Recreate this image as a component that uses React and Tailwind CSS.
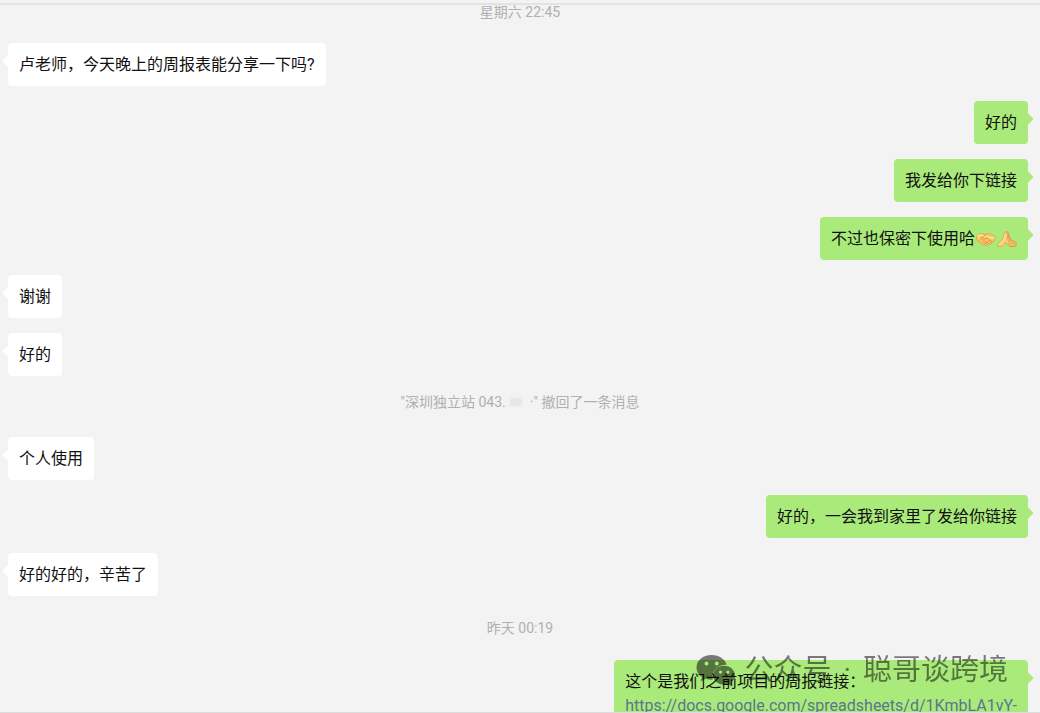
function HandshakeIcon() {
  return (
    <svg viewBox="0 0 40 28" className="w-5 h-4 shrink-0" role="img" aria-label="握手">
      <path d="M1 8 9 3l8 2 5-2 8 1 9 6-4 10-10 6-6 1-11-5-7-6z" fill="#f8c860" stroke="#d8964a" strokeWidth="1.2" strokeLinejoin="round" />
      <path d="M2 9c6-4 10-3 13-1l8 2c5 1 9 2 14 1" fill="none" stroke="#fce4a0" strokeWidth="3" />
      <path d="m21 5-9 6c0 3 3 4 6 2l4-1 10 7" fill="#fbd878" stroke="#c87f38" strokeWidth="1.4" strokeLinejoin="round" />
      <path d="m8 17 4-4m1 8 4-5m1 8 4-4m3-3 5 5m-9-3 5 5m-9-3 4 3" fill="none" stroke="#c87f38" strokeWidth="1.3" strokeLinecap="round" />
    </svg>
  );
}

function PrayIcon() {
  return (
    <svg viewBox="0 0 40 34" className="w-5 h-[17px] shrink-0" role="img" aria-label="合十">
      <path d="M17 2c3-2 5 0 6 3l4 11 10 7c3 3 2 8-2 8h-9l-6-6-3-12z" fill="#f6bd62" stroke="#c87f38" strokeWidth="1.2" strokeLinejoin="round" />
      <path d="M15 4c2-3 6-1 6 2v11l3 6c1 3-1 5-4 3l-3-3-3 5-4 3H4c-4 0-4-4-1-7l8-8z" fill="#fbcf74" stroke="#d8964a" strokeWidth="1.2" strokeLinejoin="round" />
      <path d="M17 6 13 18l-8 9" fill="none" stroke="#fde3a0" strokeWidth="2" strokeLinecap="round" />
      <path d="m22 7 3 11 9 9" fill="none" stroke="#d8964a" strokeWidth="1.4" strokeLinecap="round" />
    </svg>
  );
}

function WeChatIcon() {
  return (
    <svg viewBox="0 0 40 32" className="h-8 w-10 shrink-0" aria-hidden="true">
      <path
        fillRule="evenodd"
        fill="#000"
        d="M15.500 1C7 1 .5 6.500.5 13.500c0 4 2 7.400 5.500 9.700L4.500 27.500l5.200-2.700c2.300.7 4.700 1 7.100.8-2-8.300 4.800-15.200 13.800-14.800C29 5 23 1 15.500 1ZM10.500 7.500a2 2 0 1 1 0 4 2 2 0 0 1 0-4Zm10.300 0a2 2 0 1 1 0 4 2 2 0 0 1 0-4Z"
      />
      <path
        fillRule="evenodd"
        fill="#000"
        d="M39 21.300c0-5.300-5-9.500-11-9.500s-10.800 4.200-10.800 9.500S22 30.700 28 30.700c1.400 0 2.700-.2 3.900-.6l4.100 2-1.100-3.500c2.500-1.700 4.100-4.300 4.100-7.300ZM24.500 16.500a1.600 1.600 0 1 1 0 3.200 1.600 1.600 0 0 1 0-3.200Zm7.400 0a1.600 1.600 0 1 1 0 3.200 1.600 1.600 0 0 1 0-3.200Z"
      />
    </svg>
  );
}

function Message({ mine = false, children }) {
  return (
    <li className={"flex pr-3 pl-2 " + (mine ? "justify-end" : "justify-start")}>
      <div
        className={
          "relative max-w-[414px] rounded px-[11px] pt-[10px] pb-[9px] text-base leading-6 text-[#111] " +
          (mine ? "bg-[#a9ea7a]" : "bg-white")
        }
      >
        <span
          aria-hidden="true"
          className={
            "absolute top-[14px] size-2 rotate-45 " +
            (mine ? "-right-1 bg-[#a9ea7a]" : "-left-1 bg-white")
          }
        />
        <div className="relative">{children}</div>
      </div>
    </li>
  );
}

export default function App() {
  return (
    <main className="relative flex h-screen flex-col overflow-hidden border-b border-[#dcdcdc] bg-[#f3f3f3] font-['Roboto','Noto_Sans_CJK_SC',sans-serif]">
      <div className="h-[5px] shrink-0 border-b-2 border-[#e3e3e3]" />
      <ol className="flex flex-col gap-[15px]">
        <li className="pb-[9px] text-center text-sm leading-[14px] text-[#b0b0b0]">
          <time>星期六 22:45</time>
        </li>
        <Message>卢老师，今天晚上的周报表能分享一下吗?</Message>
        <Message mine>好的</Message>
        <Message mine>我发给你下链接</Message>
        <Message mine>
          <span className="flex items-center gap-px">
            不过也保密下使用哈
            <HandshakeIcon />
            <PrayIcon />
          </span>
        </Message>
        <Message>谢谢</Message>
        <Message>好的</Message>
        <li className="flex items-center justify-center pb-[9px] text-sm leading-[22px] text-[#b0b0b0]">
          <span>"深圳独立站 043.</span>
          <span className="mr-2 ml-1 h-2 w-3 bg-[#e6e6e6] blur-[1px]" />
          <span>·" 撤回了一条消息</span>
        </li>
        <Message>个人使用</Message>
        <Message mine>好的，一会我到家里了发给你链接</Message>
        <Message>好的好的，辛苦了</Message>
        <li className="text-center text-sm leading-[34px] text-[#b0b0b0]">
          <time>昨天 00:19</time>
        </li>
        <Message mine>
          <p>这个是我们之前项目的周报链接：</p>
          <a href="https://docs.google.com/spreadsheets/d/1KmbLA1vY-" className="whitespace-nowrap text-[#5b7590]">
            https://docs.google.com/spreadsheets/d/1KmbLA1vY-
          </a>
        </Message>
      </ol>
      <div className="pointer-events-none absolute right-8 bottom-6 flex items-center gap-2 opacity-50">
        <WeChatIcon />
        <span className="flex gap-3 text-[29px] leading-9">
          <span>公众号</span>
          <span>·</span>
          <span>聪哥谈跨境</span>
        </span>
      </div>
    </main>
  );
}
